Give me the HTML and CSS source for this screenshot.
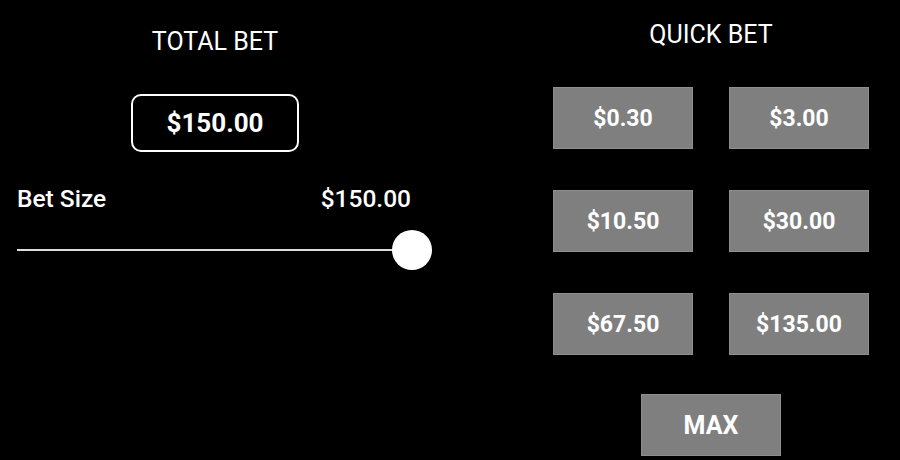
FILE: index.html
```html
<!DOCTYPE html>
<html lang="en">
<head>
    <meta charset="UTF-8">
    <meta name="viewport" content="width=device-width, initial-scale=1.0">
    <title>Bet Settings</title>
    <link rel="stylesheet" href="styles.css">
</head>
<body>
    <div class="panel">
        <div class="total">
            <h2>TOTAL BET</h2>
            <div class="total-box">$150.00</div>
            <div class="size-row">
                <span>Bet Size</span>
                <span>$150.00</span>
            </div>
            <div class="slider">
                <div class="track"></div>
                <div class="thumb"></div>
            </div>
        </div>
        <div class="quick">
            <h2>QUICK BET</h2>
            <div class="quick-grid">
                <button>$0.30</button>
                <button>$3.00</button>
                <button>$10.50</button>
                <button>$30.00</button>
                <button>$67.50</button>
                <button>$135.00</button>
            </div>
            <button class="max">MAX</button>
        </div>
    </div>
</body>
</html>
```

FILE: styles.css
```css
body {
    font-family: Roboto, 'Liberation Sans', sans-serif;
    background: #000;
    color: #fff;
    margin: 0;
    padding: 0;
    height: 460px;
    overflow: hidden;
}
.panel {
    display: flex;
}
h2 {
    font-size: 25px;
    font-weight: 400;
    line-height: 28px;
    margin: 0;
    text-align: center;
}
.total {
    width: 430px;
    padding-top: 28px;
    display: flex;
    flex-direction: column;
    align-items: center;
}
.total-box {
    margin-top: 38px;
    width: 168px;
    height: 58px;
    box-sizing: border-box;
    border: 2px solid #fff;
    border-radius: 10px;
    display: flex;
    justify-content: center;
    align-items: center;
    font-size: 26px;
    font-weight: 700;
}
.size-row {
    align-self: stretch;
    display: flex;
    justify-content: space-between;
    margin-top: 33px;
    padding: 0 19px 0 17px;
    font-size: 24.5px;
    font-weight: 500;
    line-height: 28px;
}
.slider {
    align-self: stretch;
    position: relative;
    height: 40px;
    margin: 17px 18px 0 17px;
}
.track {
    position: absolute;
    left: 0;
    right: 0;
    top: 19px;
    height: 2px;
    background: #ddd;
}
.thumb {
    position: absolute;
    right: -20px;
    top: 0;
    width: 40px;
    height: 40px;
    border-radius: 50%;
    background: #fff;
}
.quick {
    margin-left: 123px;
    width: 316px;
    padding-top: 21px;
    display: flex;
    flex-direction: column;
    align-items: center;
}
.quick-grid {
    margin-top: 38px;
    display: grid;
    grid-template-columns: 140px 140px;
    column-gap: 36px;
    row-gap: 41px;
}
button {
    width: 140px;
    height: 62px;
    background: #7f7f7f;
    border: 1px solid #8e8e8e;
    color: #fff;
    font-family: inherit;
    font-size: 23px;
    font-weight: 700;
    padding: 0;
    cursor: pointer;
}
.max {
    margin-top: 39px;
    font-size: 25px;
}
```
